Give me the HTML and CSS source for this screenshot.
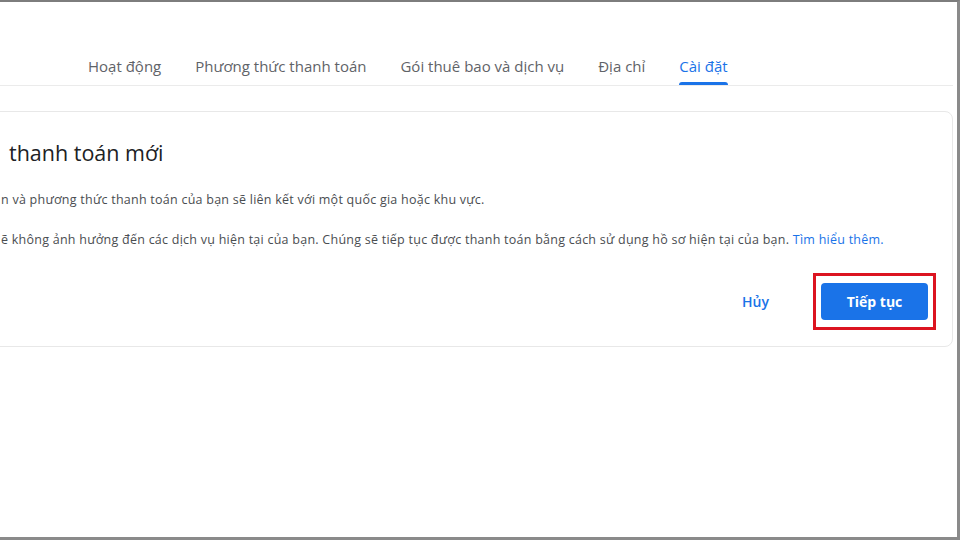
FILE: index.html
```html
<!DOCTYPE html>
<html lang="vi">
<head>
    <meta charset="UTF-8">
    <meta name="viewport" content="width=device-width, initial-scale=1.0">
    <title>Cài đặt thanh toán</title>
    <link rel="stylesheet" href="styles.css">
</head>
<body>
    <div class="frame">
        <nav class="tabs">
            <a class="tab">Hoạt động<span class="bar"></span></a>
            <a class="tab">Phương thức thanh toán<span class="bar"></span></a>
            <a class="tab">Gói thuê bao và dịch vụ<span class="bar"></span></a>
            <a class="tab">Địa chỉ<span class="bar"></span></a>
            <a class="tab active">Cài đặt<span class="bar"></span></a>
        </nav>
        <section class="card">
            <h1 class="title">thanh toán mới</h1>
            <p class="text first">n và phương thức thanh toán của bạn sẽ liên kết với một quốc gia hoặc khu vực.</p>
            <p class="text">ẽ không ảnh hưởng đến các dịch vụ hiện tại của bạn. Chúng sẽ tiếp tục được thanh toán bằng cách sử dụng hồ sơ hiện tại của bạn. <a class="link">Tìm hiểu thêm.</a></p>
            <div class="actions">
                <button class="btn-text">Hủy</button>
                <div class="mark">
                    <button class="btn-primary">Tiếp tục</button>
                </div>
            </div>
        </section>
    </div>
</body>
</html>
```

FILE: styles.css
```css
*{
    box-sizing: border-box;
}
body{
    margin: 0;
    width: 960px;
    height: 540px;
    overflow: hidden;
    background: #fff;
    font-family: 'Open Sans', Roboto, sans-serif;
}
.frame{
    height: 540px;
    border-top: 2px solid #7d7d7d;
    border-right: 3px solid #8a8a8a;
    border-bottom: 3px solid #8a8a8a;
    overflow: hidden;
}
.tabs{
    height: 84px;
    display: flex;
    align-items: flex-end;
    gap: 34px;
    padding-left: 88px;
    border-bottom: 1px solid #ebebeb;
    margin-right: 4px;
}
.tab{
    display: flex;
    flex-direction: column;
    font-size: 15px;
    line-height: 20px;
    color: #5f6368;
    cursor: pointer;
}
.tab .bar{
    display: block;
    height: 3px;
    margin-top: 6px;
    border-radius: 3px 3px 0 0;
    background: transparent;
}
.tab.active{
    color: #1a73e8;
}
.tab.active .bar{
    background: #1a73e8;
}
.card{
    margin: 25px 4px 0 -20px;
    height: 236px;
    padding: 26px 16px 0 28px;
    border: 1px solid #e8e8e8;
    border-radius: 8px;
}
.title{
    margin: 0;
    font-size: 21.5px;
    line-height: 30px;
    font-weight: 400;
    color: #202124;
}
.text{
    margin: 0 0 0 -8px;
    font-size: 12.5px;
    letter-spacing: 0.25px;
    line-height: 16px;
    color: #4a4d51;
}
.text.first{
    margin-top: 24px;
    margin-bottom: 24px;
}
.link{
    color: #1a73e8;
    cursor: pointer;
}
.actions{
    display: flex;
    justify-content: flex-end;
    align-items: center;
    gap: 40px;
    margin-top: 25px;
}
.btn-text{
    border: 0;
    background: transparent;
    font-family: inherit;
    font-size: 14px;
    font-weight: 600;
    color: #1a73e8;
    padding: 8px 4px;
}
.mark{
    border: 3px solid #dc1420;
    padding: 7px 5px;
}
.btn-primary{
    display: block;
    width: 107px;
    height: 37px;
    border: 0;
    border-radius: 4px;
    background: #1a73e8;
    color: #fff;
    font-family: inherit;
    font-size: 14px;
    font-weight: 700;
}
```
